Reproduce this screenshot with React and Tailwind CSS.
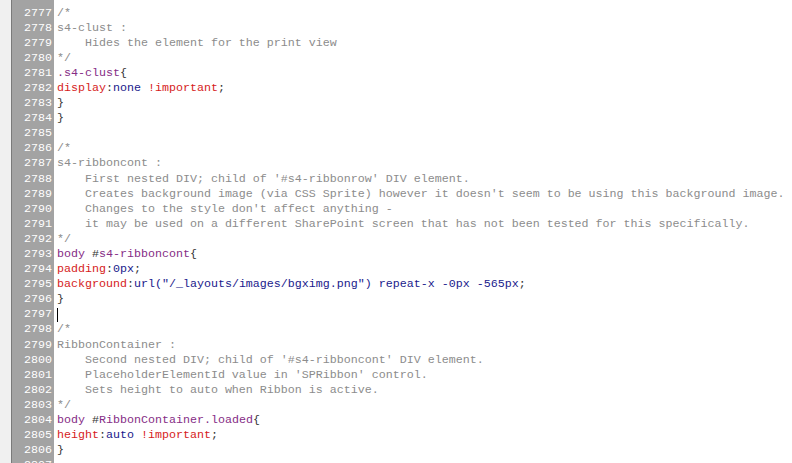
import React from 'react';

const C = 'text-[#8c8c8c]';
const SEL = 'text-[#862d86]';
const PROP = 'text-[#d61c1c]';
const VAL = 'text-[#1a1a8c]';
const PUN = 'text-[#333333]';

// each line: [number, [[class, text], ...], hasCursor]
const lines = [
  [2776, []],
  [2777, [[C, '/*']]],
  [2778, [[C, 's4-clust :']]],
  [2779, [[C, '    Hides the element for the print view']]],
  [2780, [[C, '*/']]],
  [2781, [[SEL, '.s4-clust'], [PUN, '{']]],
  [2782, [[PROP, 'display'], [PUN, ':'], [VAL, 'none'], [PROP, ' !important'], [PUN, ';']]],
  [2783, [[PUN, '}']]],
  [2784, [[PUN, '}']]],
  [2785, []],
  [2786, [[C, '/*']]],
  [2787, [[C, 's4-ribboncont :']]],
  [2788, [[C, "    First nested DIV; child of '#s4-ribbonrow' DIV element."]]],
  [2789, [[C, "    Creates background image (via CSS Sprite) however it doesn't seem to be using this background image."]]],
  [2790, [[C, "    Changes to the style don't affect anything -"]]],
  [2791, [[C, '    it may be used on a different SharePoint screen that has not been tested for this specifically.']]],
  [2792, [[C, '*/']]],
  [2793, [[SEL, 'body '], [PUN, '#'], [SEL, 's4-ribboncont'], [PUN, '{']]],
  [2794, [[PROP, 'padding'], [PUN, ':'], [VAL, '0px'], [PUN, ';']]],
  [2795, [[PROP, 'background'], [PUN, ':'], [VAL, 'url("/_layouts/images/bgximg.png") repeat-x -0px -565px'], [PUN, ';']]],
  [2796, [[PUN, '}']]],
  [2797, [], true],
  [2798, [[C, '/*']]],
  [2799, [[C, 'RibbonContainer :']]],
  [2800, [[C, "    Second nested DIV; child of '#s4-ribboncont' DIV element."]]],
  [2801, [[C, "    PlaceholderElementId value in 'SPRibbon' control."]]],
  [2802, [[C, '    Sets height to auto when Ribbon is active.']]],
  [2803, [[C, '*/']]],
  [2804, [[SEL, 'body '], [PUN, '#'], [SEL, 'RibbonContainer.loaded'], [PUN, '{']]],
  [2805, [[PROP, 'height'], [PUN, ':'], [VAL, 'auto'], [PROP, ' !important'], [PUN, ';']]],
  [2806, [[PUN, '}']]],
  [2807, []],
];

export default function App() {
  return (
    <div className="w-[792px] h-[463px] overflow-hidden bg-white font-['Liberation_Mono',monospace] text-[11.67px] leading-[15.1px]">
      <div className="-mt-[9.6px]">
        {lines.map(([num, segs, cursor]) => (
          <div key={num} className="flex h-[15.1px]">
            <div className="w-[11px] shrink-0 bg-[#f0f0f0]" />
            <div className="w-[43px] shrink-0 border-l border-[#7a7a7a] bg-[#a3a3a3] text-right pr-[2px] text-white">
              {num}
            </div>
            <div className="pl-[3px] whitespace-pre flex items-center">
              {cursor && <span className="w-px h-[14px] bg-black" />}
              {segs.map(([cls, t], i) => (
                <span key={i} className={cls}>{t}</span>
              ))}
            </div>
          </div>
        ))}
      </div>
    </div>
  );
}
